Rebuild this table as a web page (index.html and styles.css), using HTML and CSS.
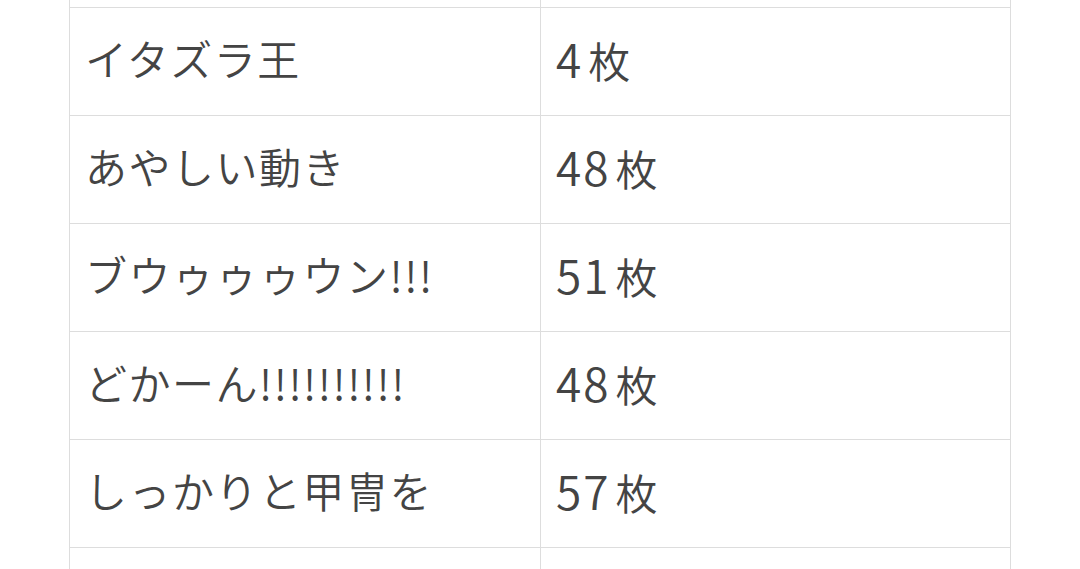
FILE: index.html
```html
<!DOCTYPE html>
<html lang="ja">
<head>
<meta charset="utf-8">
<link rel="stylesheet" href="styles.css">
</head>
<body>
<div class="page">
<table class="cards">
<tbody>
<tr><td class="name"></td><td class="count"></td></tr>
<tr><td class="name">イタズラ王</td><td class="count"><span class="num">4</span><span class="unit">枚</span></td></tr>
<tr><td class="name">あやしい動き</td><td class="count"><span class="num">48</span><span class="unit">枚</span></td></tr>
<tr><td class="name">ブウゥゥゥウン!!!</td><td class="count"><span class="num">51</span><span class="unit">枚</span></td></tr>
<tr><td class="name">どかーん!!!!!!!!!!</td><td class="count"><span class="num">48</span><span class="unit">枚</span></td></tr>
<tr><td class="name">しっかりと甲冑を</td><td class="count"><span class="num">57</span><span class="unit">枚</span></td></tr>
<tr><td class="name"></td><td class="count"></td></tr>
</tbody>
</table>
</div>
</body>
</html>
```
FILE: styles.css
```css
html, body {
  margin: 0;
  padding: 0;
  background: #ffffff;
  overflow: hidden;
  height: 569px;
}
.page {
  padding-left: 69px;
  margin-top: -101px;
}
.cards {
  border-collapse: collapse;
  width: 942px;
  table-layout: fixed;
  font-family: "Noto Sans CJK JP", "Noto Sans", sans-serif;
  font-size: 42px;
  font-weight: 350;
  letter-spacing: 1.5px;
  color: #444444;
}
.cards td {
  border: 1px solid #dddddd;
  height: 108px;
  padding: 0 15px 7px;
  vertical-align: middle;
  line-height: 1;
  box-sizing: border-box;
}
.cards td.name {
  width: 471px;
}
.cards .num {
  font-size: 46px;
  letter-spacing: 2px;
}
.cards .unit {
  margin-left: 5px;
  letter-spacing: 0;
}
```
